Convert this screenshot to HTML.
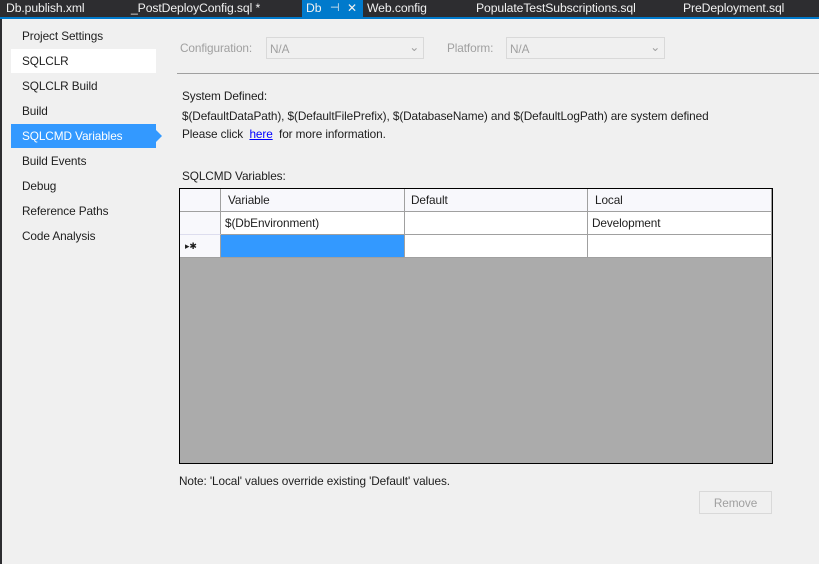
<!DOCTYPE html>
<html><head><style>
*{margin:0;padding:0;box-sizing:border-box}
body{width:819px;height:564px;background:#f0f0f0;font-family:"Liberation Sans",sans-serif;font-size:11.8px;letter-spacing:-0.1px;color:#1e1e1e;position:relative;overflow:hidden}
.a{position:absolute;white-space:nowrap}
.tabs{position:absolute;left:0;top:0;width:819px;height:17px;background:#2d2d30;color:#f1f1f1;font-size:12.2px}
.tabs span{position:absolute;top:1px}
.side{left:11px;width:145px;height:24px;line-height:25px;padding-left:11px}
.cell{position:absolute;height:23px;line-height:23px;border-right:1px solid #a0a0a0;border-bottom:1px solid #a0a0a0;background:#fff;padding-left:4px}
</style></head><body>
<div class="tabs">
<span style="left:6px">Db.publish.xml</span>
<span style="left:131px">_PostDeployConfig.sql *</span>
<div class="a" style="left:302px;top:0;width:61px;height:17px;background:#007acc"></div>
<span style="left:306px">Db</span>
<span style="left:330px;font-size:11px">⊣</span>
<span style="left:347px">✕</span>
<span style="left:367px">Web.config</span>
<span style="left:476px">PopulateTestSubscriptions.sql</span>
<span style="left:683px">PreDeployment.sql</span>
</div>
<div class="a" style="left:0;top:17px;width:819px;height:2px;background:#007acc"></div>
<div class="a" style="left:0;top:19px;width:2px;height:545px;background:#2d2d30"></div>

<div class="a side" style="top:24px">Project Settings</div>
<div class="a side" style="top:49px;background:#fff">SQLCLR</div>
<div class="a side" style="top:74px">SQLCLR Build</div>
<div class="a side" style="top:99px">Build</div>
<div class="a side" style="top:124px;background:#3399ff;color:#fff">SQLCMD Variables</div>
<div class="a" style="left:156px;top:130px;width:0;height:0;border-top:6px solid transparent;border-bottom:6px solid transparent;border-left:6px solid #3399ff"></div>
<div class="a side" style="top:149px">Build Events</div>
<div class="a side" style="top:174px">Debug</div>
<div class="a side" style="top:199px">Reference Paths</div>
<div class="a side" style="top:224px">Code Analysis</div>

<div class="a" style="left:180px;top:41px;color:#a0a0a0">Configuration:</div>
<div class="a" style="left:266px;top:37px;width:158px;height:22px;border:1px solid #d9d9d9;color:#a0a0a0;padding:4px 3px">N/A<span style="position:absolute;right:4px;top:2px">⌄</span></div>
<div class="a" style="left:447px;top:41px;color:#a0a0a0">Platform:</div>
<div class="a" style="left:506px;top:37px;width:159px;height:22px;border:1px solid #d9d9d9;color:#a0a0a0;padding:4px 3px">N/A<span style="position:absolute;right:4px;top:2px">⌄</span></div>
<div class="a" style="left:177px;top:73px;width:642px;height:1px;background:#a0a0a0"></div>

<div class="a" style="left:182px;top:89px">System Defined:</div>
<div class="a" style="left:182px;top:109px">$(DefaultDataPath), $(DefaultFilePrefix), $(DatabaseName) and $(DefaultLogPath) are system defined</div>
<div class="a" style="left:182px;top:127px">Please click &nbsp;<span style="color:#0000ff;text-decoration:underline">here</span>&nbsp; for more information.</div>
<div class="a" style="left:182px;top:169px">SQLCMD Variables:</div>

<div class="a" style="left:179px;top:188px;width:594px;height:276px;border:1px solid #000;background:#ababab">
<div class="cell" style="left:0;top:0;width:41px;background:#f8f8fc"></div>
<div class="cell" style="left:41px;top:0;width:184px;background:#f8f8fc;padding-left:7px">Variable</div>
<div class="cell" style="left:225px;top:0;width:183px;background:#f8f8fc;padding-left:6px">Default</div>
<div class="cell" style="left:408px;top:0;width:184px;background:#f8f8fc;padding-left:7px">Local</div>
<div class="cell" style="left:0;top:23px;width:41px;background:#f8f8fc;border-bottom-color:#dde"></div>
<div class="cell" style="left:41px;top:23px;width:184px">$(DbEnvironment)</div>
<div class="cell" style="left:225px;top:23px;width:183px"></div>
<div class="cell" style="left:408px;top:23px;width:184px">Development</div>
<div class="cell" style="left:0;top:46px;width:41px;background:#f8f8fc;font-size:9px;padding-left:5px">▸✱</div>
<div class="cell" style="left:41px;top:46px;width:184px;background:#3399ff"></div>
<div class="cell" style="left:225px;top:46px;width:183px"></div>
<div class="cell" style="left:408px;top:46px;width:184px"></div>
</div>

<div class="a" style="left:179px;top:474px">Note: 'Local' values override existing 'Default' values.</div>
<div class="a" style="left:699px;top:491px;width:73px;height:23px;border:1px solid #d9d9d9;color:#a0a0a0;text-align:center;line-height:22px">Remove</div>
</body></html>
